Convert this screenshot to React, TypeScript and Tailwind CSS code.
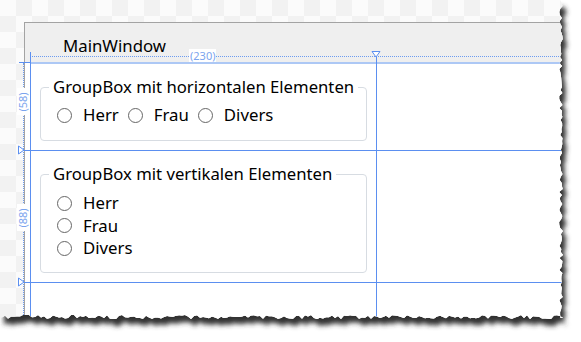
import React from "react";

const PAPER_W = 563;
const PAPER_H = 319;

// deterministic little jitter for the torn edge
function seeded(seed: number) {
  let s = seed;
  return () => {
    s = (s * 9301 + 49297) % 233280;
    return s / 233280;
  };
}

function tornPoints(w: number, h: number) {
  const r = seeded(11);
  const pts: [number, number][] = [[0, 0], [w - 3, 0]];
  for (let y = 3; y < h; y += 3) pts.push([w - 4 + r() * 4, y]);
  for (let x = w; x > 0; x -= 3) pts.push([x, h - 4 + r() * 4]);
  pts.push([0, h - 2]);
  return pts;
}

const pts = tornPoints(PAPER_W, PAPER_H);
const clip = `polygon(${pts.map(([x, y]) => `${x.toFixed(1)}px ${y.toFixed(1)}px`).join(",")})`;
const shadowPts = pts.map(([x, y]) => `${(x + 4).toFixed(1)},${(y + 7).toFixed(1)}`).join(" ");

const font = { fontFamily: '"Noto Sans", "Open Sans", sans-serif' };

function Radio({ label }: { label: string }) {
  return (
    <div className="flex items-center gap-[11px]">
      <span className="h-[15px] w-[15px] rounded-full border-[1.3px] border-[#666666] bg-white" />
      <span className="text-[16.8px] leading-[18px] text-black">{label}</span>
    </div>
  );
}

function GroupBox({ title, children, className }: { title: string; children: React.ReactNode; className?: string }) {
  return (
    <fieldset className={`w-[327px] rounded-[4px] border border-[#d7dce2] px-[8px] ${className ?? ""}`}>
      <legend className="whitespace-nowrap px-[4px] text-[16.7px] leading-[18px] text-black">{title}</legend>
      {children}
    </fieldset>
  );
}

function DownTriangle() {
  return (
    <svg width="10" height="7" viewBox="0 0 10 7">
      <path d="M1 0.5 H9 L5 6 Z" fill="white" stroke="#5b8ff0" strokeWidth="1" />
    </svg>
  );
}

function RightTriangle() {
  return (
    <svg width="7" height="10" viewBox="0 0 7 10">
      <path d="M0.5 1 V9 L6 5 Z" fill="white" stroke="#5b8ff0" strokeWidth="1" />
    </svg>
  );
}

export default function App() {
  return (
    <div className="relative h-[342px] w-[581px] overflow-hidden bg-white" style={font}>
      <svg className="absolute inset-0" width="581" height="342">
        <defs>
          <filter id="blur" x="-5%" y="-5%" width="110%" height="110%">
            <feGaussianBlur stdDeviation="2.4" />
          </filter>
        </defs>
        <polygon points={shadowPts} fill="#333333" filter="url(#blur)" />
      </svg>

      <div
        className="relative z-10 h-[319px] w-[563px] bg-[#f7f7f7] bg-[conic-gradient(#f2f2f2_25%,#fbfbfb_0_50%,#f2f2f2_0_75%,#fbfbfb_0)] bg-[length:32px_32px] pl-[24px] pt-[22px]"
        style={{ clipPath: clip }}
      >
        {/* designer window */}
        <div className="flex h-full flex-col border-l border-t border-[#a3a3a3]">
          <div className="h-[40px] shrink-0 bg-[#efefef] pl-[38px] pt-[14px] text-[16.8px] leading-[18px] text-black">
            MainWindow
          </div>
          <div className="flex-1 bg-white pl-[15px] pt-[15px]">
            <GroupBox title="GroupBox mit horizontalen Elementen" className="pb-[16px] pt-[10px]">
              <div className="flex items-center gap-[9px] pl-[8px]">
                <Radio label="Herr" />
                <Radio label="Frau" />
                <Radio label="Divers" />
              </div>
            </GroupBox>
            <GroupBox title="GroupBox mit vertikalen Elementen" className="mt-[24px] pb-[12px] pt-[9px]">
              <div className="flex flex-col pl-[8px]">
                <div className="flex h-[22.5px] items-center"><Radio label="Herr" /></div>
                <div className="flex h-[22.5px] items-center"><Radio label="Frau" /></div>
                <div className="flex h-[22.5px] items-center"><Radio label="Divers" /></div>
              </div>
            </GroupBox>
          </div>
        </div>

        {/* layout guides drawn by the designer */}
        <div className="absolute left-[30px] right-0 top-[56px] border-t border-dotted border-[#6d9cf0]" />
        <div className="absolute left-[30px] right-0 top-[62px] h-[2px] bg-[#adc8f5]" />
        <div className="absolute left-[19px] top-[62px] h-px w-[12px] bg-[#5b8ff0]" />
        <div className="absolute bottom-0 left-[30px] top-[52px] w-px bg-[#5b8ff0]" />
        <div className="absolute bottom-0 left-[23px] top-[63px] border-l border-dotted border-[#6d9cf0]" />
        <div className="absolute bottom-0 left-[376px] top-[57px] w-px bg-[#5b8ff0]" />
        <div className="absolute left-[371px] top-[51px]"><DownTriangle /></div>

        <div className="absolute left-[24px] right-0 top-[150px] h-px bg-[#5b8ff0]" />
        <div className="absolute left-[18px] top-[145px]"><RightTriangle /></div>
        <div className="absolute left-[24px] right-0 top-[282px] h-px bg-[#5b8ff0]" />
        <div className="absolute left-[18px] top-[277px]"><RightTriangle /></div>

        <div className="absolute left-[189px] top-[49px] bg-white px-[1px] text-[11px] leading-[13px] text-[#7ba4ee]">(230)</div>
        <div className="absolute left-[17px] top-[88px] flex h-[27px] w-[12px] items-center justify-center bg-white">
          <span className="-rotate-90 whitespace-nowrap text-[11px] leading-[12px] text-[#7ba4ee]">(58)</span>
        </div>
        <div className="absolute left-[17px] top-[204px] flex h-[27px] w-[12px] items-center justify-center bg-white">
          <span className="-rotate-90 whitespace-nowrap text-[11px] leading-[12px] text-[#7ba4ee]">(88)</span>
        </div>
      </div>
    </div>
  );
}
